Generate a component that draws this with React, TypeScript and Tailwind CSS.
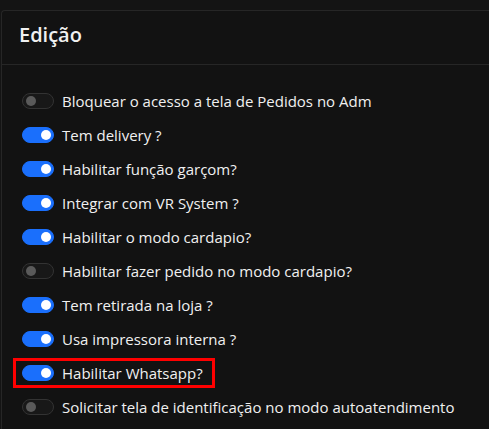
import { useState } from "react";

type Option = { label: string; on: boolean; highlight?: boolean };

const initialOptions: Option[] = [
  { label: "Bloquear o acesso a tela de Pedidos no Adm", on: false },
  { label: "Tem delivery ?", on: true },
  { label: "Habilitar função garçom?", on: true },
  { label: "Integrar com VR System ?", on: true },
  { label: "Habilitar o modo cardapio?", on: true },
  { label: "Habilitar fazer pedido no modo cardapio?", on: false },
  { label: "Tem retirada na loja ?", on: true },
  { label: "Usa impressora interna ?", on: true },
  { label: "Habilitar Whatsapp?", on: true, highlight: true },
  { label: "Solicitar tela de identificação no modo autoatendimento", on: false },
];

export default function App() {
  const [options, setOptions] = useState(initialOptions);

  const toggle = (i: number) =>
    setOptions((prev) => prev.map((o, idx) => (idx === i ? { ...o, on: !o.on } : o)));

  return (
    <div
      className="h-[429px] w-[489px] overflow-hidden bg-[#141414] pt-[10px] pl-[1px] text-[#f0f0f0]"
      style={{ fontFamily: '"Open Sans", "Noto Sans", sans-serif' }}
    >
      <div className="h-full rounded-tl-[4px] border-t border-l border-[#262626] bg-[#121212]">
        {/* Header */}
        <div className="flex h-[54px] items-center border-b border-[#262626] px-[17px] pb-[5px]">
          <h5 className="text-[20px] font-semibold leading-none">Edição</h5>
        </div>

        {/* Switch list */}
        <div className="flex flex-col pt-[19px] pl-[11px]">
          {options.map((o, i) => (
            <SwitchRow key={o.label} option={o} onClick={() => toggle(i)} />
          ))}
        </div>
      </div>
    </div>
  );
}

function SwitchRow({ option, onClick }: { option: Option; onClick: () => void }) {
  return (
    <div className="flex h-[34px] items-center">
      <label
        className={`flex cursor-pointer items-center gap-[8px] ${
          option.highlight
            ? "border-[3px] border-[#ff0000] py-[4px] pl-[6px] pr-[9px]"
            : "py-[7px] pl-[9px] pr-[8px]"
        }`}
        onClick={onClick}
      >
        <span
          className={`relative inline-block h-[16px] w-[32px] shrink-0 rounded-full border ${
            option.on ? "border-[#1a6ffc] bg-[#1a6ffc]" : "border-[#333] bg-[#181818]"
          }`}
        >
          <span
            className={`absolute top-[2px] h-[10px] w-[10px] rounded-full ${
              option.on ? "left-[18px] bg-white" : "left-[3px] bg-[#5a5a5a]"
            }`}
          />
        </span>
        <span className="whitespace-nowrap text-[15px] leading-none">{option.label}</span>
      </label>
    </div>
  );
}
